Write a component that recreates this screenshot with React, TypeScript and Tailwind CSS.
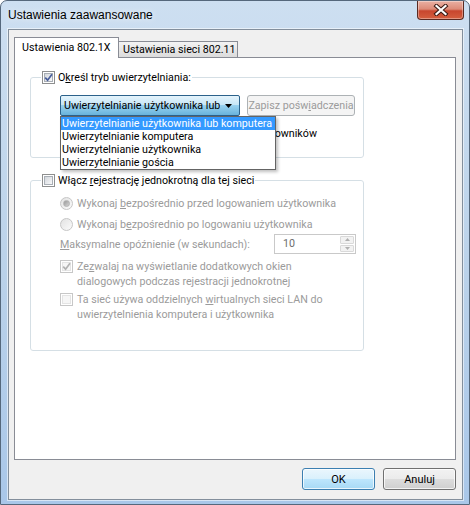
import clsx from "clsx";

const ui = "font-['Segoe_UI',Roboto,'Liberation_Sans',sans-serif] text-[10.7px] leading-[15px] text-black whitespace-nowrap";
const dim = "text-[#9b9b9b]";

function Key({ children }: { children: string }) {
  return <span className="underline">{children}</span>;
}

function CheckBox({ checked = false, disabled = false }: { checked?: boolean; disabled?: boolean }) {
  return (
    <span
      className={clsx(
        "relative flex h-[13px] w-[13px] shrink-0 items-center justify-center border bg-white",
        disabled ? "border-[#c7c7c7]" : "border-[#8e8f8f]"
      )}
    >
      <span
        className={clsx(
          "h-[9px] w-[9px] border",
          disabled ? "border-[#e4e4e4] bg-[#f6f6f6]" : "border-[#a9afb6] bg-gradient-to-br from-[#d3d7dc] to-[#f8f8f9]"
        )}
      />
      {checked && (
        <svg viewBox="0 0 11 11" className="absolute left-0 top-0 h-[11px] w-[11px]">
          <path d="M2.2 5.6 L4.6 8.2 L9 2.2" fill="none" stroke={disabled ? "#b2b2b2" : "#4a5f9c"} strokeWidth="1.7" />
        </svg>
      )}
    </span>
  );
}

function Radio({ checked = false }: { checked?: boolean }) {
  return (
    <span className="flex h-[13px] w-[13px] shrink-0 items-center justify-center rounded-full border border-[#c6c6c6] bg-gradient-to-br from-[#e2e2e2] to-[#fbfbfb]">
      {checked && <span className="h-[7px] w-[7px] rounded-full border border-[#b3b3b3] bg-gradient-to-br from-[#9a9a9a] to-[#d4d4d4]" />}
    </span>
  );
}

function DialogButton({ label, primary = false }: { label: string; primary?: boolean }) {
  return (
    <button
      className={clsx(
        "h-[22px] w-[73px] rounded-[3px] border text-[11px] text-black shadow-[inset_0_0_0_1px_rgba(255,255,255,0.75)]",
        primary
          ? "border-[#3c7fb1] bg-[linear-gradient(#eaf6fd_0%,#d9f0fc_50%,#bee6fd_50%,#a7d9f5_100%)]"
          : "border-[#707070] bg-[linear-gradient(#f2f2f2_0%,#ebebeb_50%,#dddddd_50%,#cfcfcf_100%)]"
      )}
    >
      {label}
    </button>
  );
}

function CloseButton() {
  return (
    <div className="flex h-[19px] w-[47px] items-center justify-center rounded-b-[4px] border border-t-0 border-[#5a2a22] bg-[linear-gradient(#eab0a3_0%,#dd8b78_45%,#c8462e_55%,#d45f3f_100%)] shadow-[inset_0_0_0_1px_rgba(255,255,255,0.35)]">
      <svg viewBox="0 0 16 12" className="h-[12px] w-[16px]">
        <path d="M3.5 2 L12.5 10 M12.5 2 L3.5 10" stroke="#3b1a14" strokeWidth="4.2" strokeLinecap="square" />
        <path d="M3.5 2 L12.5 10 M12.5 2 L3.5 10" stroke="#ffffff" strokeWidth="2.2" strokeLinecap="square" />
      </svg>
    </div>
  );
}

const modes = [
  "Uwierzytelnianie użytkownika lub komputera",
  "Uwierzytelnianie komputera",
  "Uwierzytelnianie użytkownika",
  "Uwierzytelnianie gościa",
];

export default function App() {
  return (
    <div
      className={clsx(
        "flex h-[505px] w-[470px] flex-col overflow-hidden rounded-t-[7px] border border-[#55687c] bg-gradient-to-b from-[#cddff1] via-[#bcd3ea] to-[#a9c7e9]",
        ui
      )}
    >
      {/* title bar */}
      <div className="flex h-[28px] shrink-0 items-start justify-between pl-[7px] pr-[5px]">
        <span className="mt-[7px] font-['Segoe_UI','Liberation_Sans',sans-serif] text-[12px] [text-shadow:0_0_6px_#ffffff]">
          Ustawienia zaawansowane
        </span>
        <CloseButton />
      </div>

      {/* client area */}
      <div className="mb-[4px] ml-[7px] mr-[6px] flex flex-1 flex-col border border-[#838f9c] bg-[#f0f0f0] pb-[9px] pl-[5px] pr-[6px] pt-[7px] shadow-[0_0_0_1px_rgba(255,255,255,0.55)]">
        {/* tabs */}
        <div className="flex h-[20px] shrink-0 items-end">
          <div className="relative z-10 -mb-[1px] flex h-[21px] w-[105px] items-start border border-b-0 border-[#898c95] bg-white pl-[7px] pt-[2px]">
            Ustawienia 802.1X
          </div>
          <div className="flex h-[16px] w-[119px] items-start border border-b-0 border-l-0 border-[#898c95] bg-gradient-to-b from-[#f3f3f3] to-[#dcdcdc] pl-[4px]">
            Ustawienia sieci 802.11
          </div>
        </div>

        {/* tab page */}
        <div className="flex-1 border border-[#898c95] bg-white">
          <fieldset className="ml-[15px] mt-[12px] w-[334px] rounded-[3px] border border-[#d5dfe5]">
            <legend className="ml-[10px] flex items-center gap-[3px] px-[1px]">
              <CheckBox checked />
              <span>
                O<Key>k</Key>reśl tryb uwierzytelniania:
              </span>
            </legend>
            <div className="pb-[16px] pl-[29px] pt-[10px]">
              <div className="flex items-start gap-[7px]">
                <div className="relative">
                  <div className="flex h-[21px] w-[180px] items-center justify-between rounded-[2px] border border-[#2c628b] bg-[linear-gradient(#e5f4fc_0%,#c4e5f6_50%,#98d1ef_50%,#68b3db_100%)] pl-[3px] pr-[7px]">
                    <span className="overflow-hidden">Uwierzytelnianie użytkownika lub</span>
                    <svg viewBox="0 0 7 4" className="h-[4px] w-[7px] shrink-0">
                      <path d="M0 0 H7 L3.5 4 Z" fill="#000" />
                    </svg>
                  </div>
                  <ul className="absolute left-0 top-full z-20 w-[216px] border border-[#646464] bg-white leading-[13px] shadow-[2px_2px_3px_rgba(0,0,0,0.25)]">
                    {modes.map((m, i) => (
                      <li key={m} className={clsx("h-[13px] pl-[1px]", i === 0 && "bg-[#3399ff] text-white")}>
                        {m}
                      </li>
                    ))}
                  </ul>
                </div>
                <div className={clsx("flex h-[21px] w-[108px] items-center justify-center rounded-[3px] border border-[#adb2b5] bg-[#f4f4f4]", dim)}>
                  <span>
                    Zapisz pośw<Key>i</Key>adczenia
                  </span>
                </div>
              </div>
              <div className="mt-[10px] flex items-center gap-[4px]">
                <CheckBox />
                <span>Usuń poświadczenia dla wszystkich użytkowników</span>
              </div>
            </div>
          </fieldset>

          <fieldset className="ml-[15px] mt-[15px] w-[334px] rounded-[3px] border border-[#d5dfe5]">
            <legend className="ml-[10px] flex items-center gap-[3px] px-[1px]">
              <CheckBox />
              <span>
                Włącz <Key>r</Key>ejestrację jednokrotną dla tej sieci
              </span>
            </legend>
            <div className={clsx("pb-[28px] pl-[29px] pr-[7px] pt-[8px]", dim)}>
              <div className="flex items-center gap-[4px]">
                <Radio checked />
                <span>
                  Wykonaj <Key>b</Key>ezpośrednio przed logowaniem użytkownika
                </span>
              </div>
              <div className="mt-[6px] flex items-center gap-[4px]">
                <Radio />
                <span>
                  Wykonaj b<Key>e</Key>zpośrednio po logowaniu użytkownika
                </span>
              </div>
              <div className="mt-[2px] flex h-[20px] items-center justify-between">
                <span>
                  <Key>M</Key>aksymalne opóźnienie (w sekundach):
                </span>
                <div className="flex h-[20px] w-[82px] border border-[#c9c9c9] bg-white">
                  <span className="flex-1 pl-[8px] leading-[18px] text-[#6d6d6d]">10</span>
                  <div className="flex w-[16px] flex-col gap-[1px] p-[1px]">
                    <div className="flex flex-1 items-center justify-center rounded-[1px] border border-[#d9d9d9] bg-[#f2f2f2]">
                      <svg viewBox="0 0 5 3" className="h-[3px] w-[5px]">
                        <path d="M0 3 H5 L2.5 0 Z" fill="#b0b0b0" />
                      </svg>
                    </div>
                    <div className="flex flex-1 items-center justify-center rounded-[1px] border border-[#d9d9d9] bg-[#f2f2f2]">
                      <svg viewBox="0 0 5 3" className="h-[3px] w-[5px]">
                        <path d="M0 0 H5 L2.5 3 Z" fill="#b0b0b0" />
                      </svg>
                    </div>
                  </div>
                </div>
              </div>
              <div className="mt-[5px] flex items-start gap-[4px]">
                <span className="mt-[1px]">
                  <CheckBox checked disabled />
                </span>
                <span>
                  Ze<Key>z</Key>walaj na wyświetlanie dodatkowych okien
                  <br />
                  dialogowych podczas rejestracji jednokrotnej
                </span>
              </div>
              <div className="mt-[3px] flex items-start gap-[4px]">
                <span className="mt-[1px]">
                  <CheckBox disabled />
                </span>
                <span>
                  Ta sieć używa oddzielnych <Key>w</Key>irtualnych sieci LAN do
                  <br />
                  uwierzytelnienia komputera i użytkownika
                </span>
              </div>
            </div>
          </fieldset>
        </div>

        {/* buttons */}
        <div className="mt-[8px] flex shrink-0 justify-end gap-[8px]">
          <DialogButton label="OK" primary />
          <DialogButton label="Anuluj" />
        </div>
      </div>
    </div>
  );
}
